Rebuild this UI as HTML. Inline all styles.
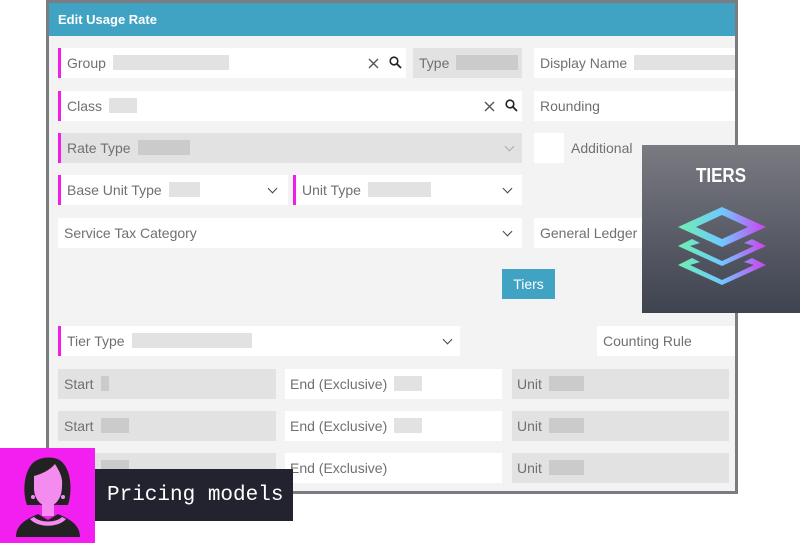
<!DOCTYPE html>
<html><head><style>
*{box-sizing:border-box;margin:0;padding:0}
body{width:800px;height:543px;background:#fff;position:relative;overflow:hidden;font-family:"Liberation Sans",sans-serif;font-size:14px;color:#707070}
.win{position:absolute;left:46px;top:0;width:692px;height:494px;background:#7b7b82;}
.in{position:absolute;left:3px;top:3px;width:686px;height:488px;background:#f3f3f3}
.hd{position:absolute;left:0;top:0;width:686px;height:33px;background:#41a3c4;color:#fff;font-weight:bold;font-size:13px;padding:9px 9px}
.f{position:absolute;height:30px;background:#fff;padding:0 6px;line-height:30px;white-space:nowrap;overflow:hidden}
.g{background:#e2e2e2}
.p{border-left:3px solid #f01ee6}
.ph{display:inline-block;vertical-align:middle;height:15px;background:#e2e2e2;margin-left:7px;margin-top:-3px}
.g .ph{background:#cbcbcb}
.ic{position:absolute;top:8px}
.chev{position:absolute;top:10px;width:7px;height:7px;border-right:1.5px solid #444;border-bottom:1.5px solid #444;transform:rotate(45deg)}
</style></head><body>
<div class="win"><div class="in">
<div class="hd">Edit Usage Rate</div>
</div></div>
<div class="f p" style="left:58px;top:48px;width:348px">Group<span class="ph" style="width:116px"></span><svg class="ic" style="left:307px;top:10px" width="11" height="11"><path d="M1 1L10 10M10 1L1 10" stroke="#555" stroke-width="1.4"/></svg><svg class="ic" style="left:328px" width="13" height="13" viewBox="0 0 13 13"><circle cx="5" cy="5" r="3.8" stroke="#222" stroke-width="1.6" fill="none"/><path d="M8 8l4 4" stroke="#222" stroke-width="1.8"/></svg></div>
<div class="f g" style="left:413px;top:48px;width:109px">Type<span class="ph" style="width:62px"></span></div>
<div class="f" style="left:534px;top:48px;width:201px">Display Name<span class="ph" style="width:120px"></span></div>
<div class="f p" style="left:58px;top:91px;width:464px">Class<span class="ph" style="width:28px"></span><svg class="ic" style="left:423px;top:10px" width="11" height="11"><path d="M1 1L10 10M10 1L1 10" stroke="#555" stroke-width="1.4"/></svg><svg class="ic" style="left:444px" width="13" height="13" viewBox="0 0 13 13"><circle cx="5" cy="5" r="3.8" stroke="#222" stroke-width="1.6" fill="none"/><path d="M8 8l4 4" stroke="#222" stroke-width="1.8"/></svg></div>
<div class="f" style="left:534px;top:91px;width:201px">Rounding</div>
<div class="f p g" style="left:58px;top:133px;width:464px">Rate Type<span class="ph" style="width:52px"></span><span class="chev" style="left:445px;border-color:#aaa"></span></div>
<div class="f" style="left:534px;top:133px;width:30px"></div>
<div style="position:absolute;left:571px;top:133px;line-height:30px">Additional</div>
<div class="f p" style="left:58px;top:175px;width:230px">Base Unit Type<span class="ph" style="width:31px"></span><span class="chev" style="left:208px"></span></div>
<div class="f p" style="left:293px;top:175px;width:229px">Unit Type<span class="ph" style="width:63px"></span><span class="chev" style="left:208px"></span></div>
<div class="f" style="left:58px;top:218px;width:464px;padding-left:6px">Service Tax Category<span class="chev" style="left:446px"></span></div>
<div class="f" style="left:534px;top:218px;width:110px">General Ledger</div>
<div style="position:absolute;left:502px;top:269px;width:53px;height:30px;background:#41a3c4;color:#fff;text-align:center;line-height:30px">Tiers</div>
<div class="f p" style="left:58px;top:326px;width:402px">Tier Type<span class="ph" style="width:120px"></span><span class="chev" style="left:383px"></span></div>
<div class="f" style="left:597px;top:326px;width:138px">Counting Rule</div>
<div class="f g" style="left:58px;top:369px;width:218px;padding-left:6px">Start<span class="ph" style="width:8px"></span></div>
<div class="f" style="left:285px;top:369px;width:217px;padding-left:5px">End (Exclusive)<span class="ph" style="width:28px"></span></div>
<div class="f g" style="left:512px;top:369px;width:217px;padding-left:5px">Unit<span class="ph" style="width:35px"></span></div>
<div class="f g" style="left:58px;top:411px;width:218px;padding-left:6px">Start<span class="ph" style="width:28px"></span></div>
<div class="f" style="left:285px;top:411px;width:217px;padding-left:5px">End (Exclusive)<span class="ph" style="width:28px"></span></div>
<div class="f g" style="left:512px;top:411px;width:217px;padding-left:5px">Unit<span class="ph" style="width:35px"></span></div>
<div class="f g" style="left:58px;top:453px;width:218px;padding-left:6px">Start<span class="ph" style="width:28px"></span></div>
<div class="f" style="left:285px;top:453px;width:217px;padding-left:5px">End (Exclusive)</div>
<div class="f g" style="left:512px;top:453px;width:217px;padding-left:5px">Unit<span class="ph" style="width:35px"></span></div>

<div style="position:absolute;left:642px;top:145px;width:158px;height:168px;background:linear-gradient(#7a7a82,#3e4350)">
<div style="position:absolute;top:20px;width:158px;text-align:center;color:#fff;font-weight:bold;font-size:20px;transform:scaleX(.85)">TIERS</div>
<svg style="position:absolute;left:34px;top:60px" width="92" height="82" viewBox="0 0 92 82">
<defs><linearGradient id="lg" x1="0" x2="1"><stop offset="0" stop-color="#6ef0b0"/><stop offset=".5" stop-color="#70c8ff"/><stop offset="1" stop-color="#d040f0"/></linearGradient></defs>
<path d="M2 22L46 2L90 22L46 42Z M20 22L46 34L72 22L46 10Z" fill="url(#lg)" fill-rule="evenodd"/>
<path d="M2 41L16 34L24 38L14 41L46 56L78 41L68 38L76 34L90 41L46 61Z" fill="url(#lg)"/>
<path d="M2 60L16 53L24 57L14 60L46 75L78 60L68 57L76 53L90 60L46 80Z" fill="url(#lg)"/>
</svg></div>

<div style="position:absolute;left:0;top:448px;width:95px;height:95px;background:#f21ff0">
<svg width="95" height="95" viewBox="0 0 95 95">
<path d="M27 57C22 44 24 22 34 14C42 8 56 8 62 14C72 24 72 44 68 57Z" fill="#222"/>
<path d="M34 28C42 26 50 22 55 16C60 24 63 30 62 38C62 50 56 58 48 58C40 58 34 50 34 40Z" fill="#f48cf0"/>
<path d="M42 56L54 56L54 68L42 68Z" fill="#f48cf0"/>
<path d="M16 89C16 78 24 72 38 66L48 72L58 66C72 72 80 78 80 89Z" fill="#222"/>
<path d="M30 71C38 80 58 80 66 71L62 69C56 75 40 75 34 69Z" fill="#f48cf0"/>
<circle cx="33" cy="49" r="2" fill="#f48cf0"/><circle cx="63" cy="49" r="2" fill="#f48cf0"/>
</svg></div>
<div style="position:absolute;left:95px;top:469px;width:198px;height:52px;background:#23232f;color:#fff;font-family:'Liberation Mono',monospace;font-size:21px;line-height:54px;padding-left:12px;white-space:nowrap;overflow:hidden">Pricing models</div>
</body></html>
